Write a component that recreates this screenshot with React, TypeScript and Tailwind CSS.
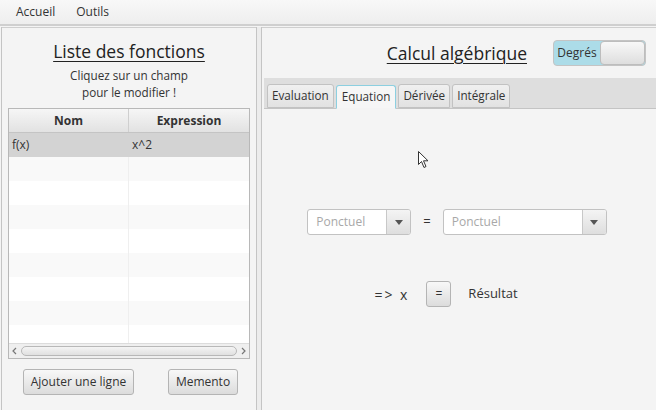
import React from "react";

const rows = [
  { nom: "f(x)", expr: "x^2" },
  { nom: "", expr: "" },
  { nom: "", expr: "" },
  { nom: "", expr: "" },
  { nom: "", expr: "" },
  { nom: "", expr: "" },
  { nom: "", expr: "" },
  { nom: "", expr: "" },
  { nom: "", expr: "" },
];

const tabs = ["Evaluation", "Equation", "Dérivée", "Intégrale"];

function Combo({ width }: { width: string }) {
  return (
    <div
      className={`flex h-[26px] ${width} overflow-hidden rounded-[3px] border border-[#c2c2c2] bg-white`}
    >
      <div className="flex flex-1 items-center px-[8px] text-[12px] text-[#a8a8a8]">
        Ponctuel
      </div>
      <div className="flex w-[24px] items-center justify-center border-l border-[#c8c8c8] bg-gradient-to-b from-[#f4f4f4] to-[#dedede]">
        <svg width="8" height="5" viewBox="0 0 8 5">
          <path d="M0 0 L8 0 L4 5 Z" fill="#555" />
        </svg>
      </div>
    </div>
  );
}

function Button({ children, className = "" }: { children: React.ReactNode; className?: string }) {
  return (
    <button
      className={`flex items-center justify-center rounded-[3px] border border-[#b4b4b4] bg-gradient-to-b from-[#f8f8f8] to-[#dcdcdc] text-[12px] text-[#333] ${className}`}
    >
      {children}
    </button>
  );
}

export default function App() {
  return (
    <div
      className="relative flex h-[410px] w-[656px] flex-col overflow-hidden bg-[#f4f4f4] text-[#333]"
      style={{ fontFamily: '"Open Sans", "Noto Sans", sans-serif' }}
    >
      {/* Menu bar */}
      <div className="flex h-[26px] items-center gap-[21px] border-b-2 border-[#cfcfcf] bg-gradient-to-b from-[#f8f8f8] to-[#eeeeee] pl-[16px] text-[12px] text-[#333]">
        <span>Accueil</span>
        <span>Outils</span>
      </div>

      {/* Split pane */}
      <div className="ml-[1px] mt-[1px] flex flex-1 border-l border-[#c4c4c4]">
        {/* Left */}
        <div className="flex w-[254px] flex-col border-t border-[#cfcfcf]">
          <div className="mt-[10px] text-center text-[17.5px] leading-[26px] text-[#222] underline decoration-1 underline-offset-[3px]">
            Liste des fonctions
          </div>
          <div className="mt-[3px] text-center text-[11.7px] leading-[17px] text-[#333]">
            Cliquez sur un champ
            <br />
            pour le modifier !
          </div>

          {/* Table */}
          <div className="ml-[6px] mt-[7px] flex h-[251px] w-[242px] flex-col border border-[#b8b8b8] bg-white">
            <div className="flex h-[24px] border-b border-[#c4c4c4] bg-gradient-to-b from-[#f6f6f6] to-[#e2e2e2] text-[12px] font-bold text-[#333]">
              <div className="flex w-[120px] items-center justify-center border-r border-[#cfcfcf]">Nom</div>
              <div className="flex flex-1 items-center justify-center">Expression</div>
            </div>
            <div className="flex-1 overflow-hidden">
              {rows.map((r, i) => (
                <div
                  key={i}
                  className={`flex h-[24px] text-[12px] ${
                    i === 0 ? "bg-[#d3d3d3]" : i % 2 === 1 ? "bg-[#f9f9f9]" : "bg-white"
                  }`}
                >
                  <div className={`flex w-[120px] items-center pl-[3px] ${i === 0 ? "" : "border-r border-[#efefef]"}`}>
                    {r.nom}
                  </div>
                  <div className="flex flex-1 items-center pl-[3px]">{r.expr}</div>
                </div>
              ))}
            </div>
            {/* Scrollbar */}
            <div className="flex h-[15px] items-center border-t border-[#dcdcdc] bg-[#efefef] px-[1px]">
              <svg width="10" height="10" viewBox="0 0 10 10">
                <path d="M6 2 L3 5 L6 8" fill="none" stroke="#777" strokeWidth="1.2" />
              </svg>
              <div className="mx-[1px] h-[10px] flex-1 rounded-[5px] border border-[#b8b8b8] bg-gradient-to-b from-[#f4f4f4] to-[#e0e0e0]" />
              <svg width="10" height="10" viewBox="0 0 10 10">
                <path d="M4 2 L7 5 L4 8" fill="none" stroke="#777" strokeWidth="1.2" />
              </svg>
            </div>
          </div>

          <div className="mt-[10px] flex justify-between pl-[21px] pr-[18px]">
            <Button className="h-[26px] w-[111px]">Ajouter une ligne</Button>
            <Button className="h-[26px] w-[70px]">Memento</Button>
          </div>
        </div>

        {/* Divider */}
        <div className="flex w-[6px] border-x border-[#c4c4c4] bg-[#ececec]" />

        {/* Right */}
        <div className="flex flex-1 flex-col border-t border-[#cfcfcf]">
          <div className="flex h-[50px] items-center justify-end pr-[10px]">
            <div className="mr-[26px] text-[17.5px] leading-[26px] text-[#222] underline decoration-1 underline-offset-[3px]">
              Calcul algébrique
            </div>
            <div className="flex h-[26px] w-[93px] overflow-hidden rounded-[4px] border border-[#c4c4c4] bg-[#acdce8]">
              <div className="flex w-[46px] items-center justify-center text-[12px] text-[#333]">Degrés</div>
              <div className="flex-1 rounded-[4px] border border-[#bdbdbd] bg-gradient-to-b from-[#f8f8f8] to-[#dedede]" />
            </div>
          </div>

          {/* Tabs */}
          <div className="ml-[2px] flex h-[31px] items-end gap-[2px] border-b border-[#c4c4c4] bg-[#dedede] pl-[3px]">
            {tabs.map((t) => (
              <div
                key={t}
                className={`flex h-[24px] items-center rounded-t-[3px] border px-[4px] text-[11.7px] ${
                  t === "Equation"
                    ? "relative top-[1px] border-[#8ccfe0] border-b-[#f4f4f4] bg-[#f6f6f6] px-[5px] text-[#333]"
                    : "border-[#c2c2c2] bg-gradient-to-b from-[#f0f0f0] to-[#e2e2e2] text-[#333]"
                }`}
              >
                {t}
              </div>
            ))}
          </div>

          <div className="ml-[2px] flex flex-1 flex-col items-center">
            <div className="mt-[100px] flex items-center gap-[12px] pr-[6px]">
              <Combo width="w-[104px]" />
              <span className="text-[13px]">=</span>
              <Combo width="w-[164px]" />
            </div>
            <div className="mt-[46px] flex items-center pr-[28px]">
              <span className="mr-[17px] text-[14px] tracking-[2px]">=&gt; x</span>
              <Button className="h-[26px] w-[25px] text-[10px]">=</Button>
              <span className="ml-[17px] text-[13px]">Résultat</span>
            </div>
          </div>
        </div>
      </div>

      {/* Mouse cursor */}
      <svg
        className="absolute left-[418px] top-[151px]"
        width="12"
        height="18"
        viewBox="0 0 12 18"
      >
        <path
          d="M0.5 0.5 L0.5 13.5 L3.5 10.5 L6 16.5 L8 15.5 L5.5 9.8 L10 9.8 Z"
          fill="#fff"
          stroke="#333"
          strokeWidth="1"
        />
      </svg>
    </div>
  );
}
